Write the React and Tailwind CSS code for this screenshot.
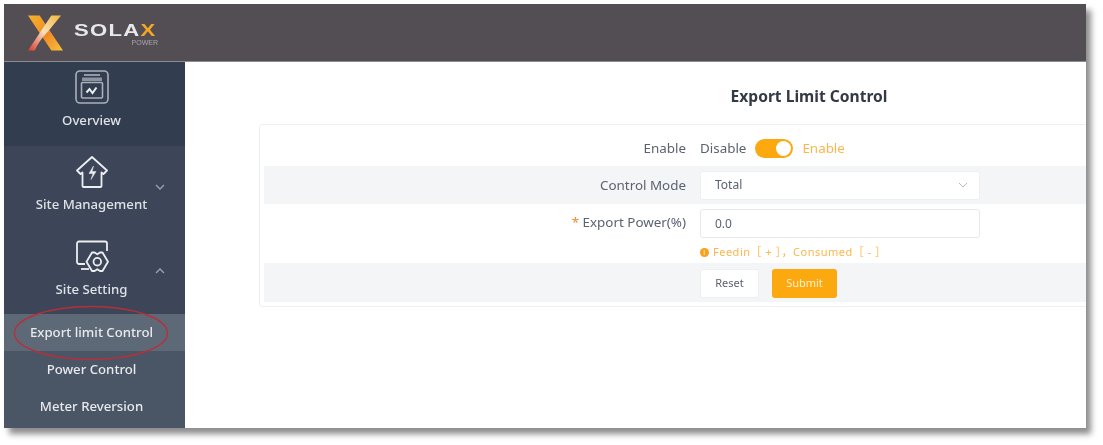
const font = { fontFamily: '"Noto Sans", "Open Sans", "Noto Sans CJK SC", sans-serif' };
const logoFont = { fontFamily: '"Liberation Sans", sans-serif' };

function Logo() {
  return (
    <div className="flex items-center pl-[23px] h-full blur-[0.5px]">
      <svg width="37" height="38" viewBox="0 0 38 38">
        <defs>
          <linearGradient id="a" x1="0" y1="0" x2="1" y2="1">
            <stop offset="0" stopColor="#f5b32c" />
            <stop offset="0.55" stopColor="#f08a24" />
            <stop offset="1" stopColor="#f7c23c" />
          </linearGradient>
          <linearGradient id="b" x1="1" y1="0" x2="0" y2="1">
            <stop offset="0" stopColor="#f7b733" />
            <stop offset="0.5" stopColor="#f5e0c0" />
            <stop offset="1" stopColor="#d9392a" />
          </linearGradient>
        </defs>
        <path d="M1 1h12l24 36H25z" fill="url(#a)" />
        <path d="M35 1H25L1 37h7c4-9 10-16 14-20z" fill="url(#b)" />
      </svg>
      <div className="ml-[10px] mt-[4px] w-[84px] flex flex-col">
        <div className="text-[17px] leading-[15px] font-bold tracking-[1px] text-[#e8e8ea] origin-left scale-x-[1.3] whitespace-nowrap" style={logoFont}>
          SOLA<span className="text-[#f5a623]">X</span>
        </div>
        <div className="text-[7px] leading-[8px] mt-[1px] text-right text-[#a9a8ac]" style={logoFont}>POWER</div>
      </div>
    </div>
  );
}

function NavItem({ icon, label, arrow, className, labelClass = "mt-[6px]" }) {
  return (
    <div className={`relative flex flex-col items-center pr-[6px] ${className}`}>
      {icon}
      <span className={`text-[13.2px] leading-[18px] font-medium text-[#dfe2e6] ${labelClass}`}>{label}</span>
      {arrow && (
        <svg className="absolute right-[20px] top-[38px]" width="10" height="6" viewBox="0 0 10 6" fill="none" stroke="#9aa3af" strokeWidth="1.3">
          <path d={arrow === "down" ? "M1 1l4 4 4-4" : "M1 5l4-4 4 4"} />
        </svg>
      )}
    </div>
  );
}

function SubItem({ label, active }) {
  return (
    <div className={`h-[37px] flex items-center justify-center pr-[6px] text-[13.2px] font-medium text-[#e8eaed] ${active ? "bg-[#5e6977]" : ""}`}>
      {label}
    </div>
  );
}

function App() {
  return (
    <div className="w-[1103px] h-[445px] bg-white overflow-hidden pl-[4px] pt-[4px]" style={font}>
      <div className="relative w-[1082px] h-[424px] flex flex-col bg-white shadow-[5px_6px_6px_rgba(0,0,0,0.45)]">
        <header className="h-[58px] shrink-0 bg-[#524e53] border-b border-[#8f8b92]">
          <Logo />
        </header>

        <div className="flex flex-1 min-h-0">
          <aside className="w-[181px] shrink-0 bg-[#3c4658] flex flex-col blur-[0.5px]">
            <NavItem
              className="h-[84px] pt-[8px] bg-[#333d50]"
              labelClass="mt-[7px]"
              label="Overview"
              icon={
                <svg width="34" height="34" viewBox="0 0 34 34" fill="none" stroke="#aab0ba" strokeWidth="1.6">
                  <rect x="1" y="1" width="32" height="32" rx="4" />
                  <path d="M9 5h16" />
                  <rect x="7" y="7.500" width="20" height="3.500" fill="#8d94a0" stroke="none" />
                  <rect x="6.500" y="12.500" width="21" height="15.500" rx="1" />
                  <path d="M11.500 22.500l3-3.500 3 4 4-5.500" stroke="#eceef0" strokeWidth="2" />
                </svg>
              }
            />
            <NavItem
              className="h-[84px] pt-[9px]"
              label="Site Management"
              arrow="down"
              icon={
                <svg width="34" height="34" viewBox="0 0 34 34" fill="none" stroke="#eceef0" strokeWidth="1.8" strokeLinejoin="round">
                  <path d="M17 2L2 15.500l3.500 3.500 2-1.500V31a1 1 0 001 1h17a1 1 0 001-1V17.500l2 1.500 3.500-3.500z" />
                  <path d="M18.500 11l-4.500 7.500h4l-2 6 5-8h-4z" fill="#eceef0" strokeWidth="0.5" />
                </svg>
              }
            />
            <NavItem
              className="h-[84px] pt-[10px]"
              label="Site Setting"
              arrow="up"
              icon={
                <svg width="34" height="34" viewBox="0 0 34 34" fill="none" stroke="#eceef0" strokeWidth="1.8" strokeLinejoin="round">
                  <path d="M10 24H4a2 2 0 01-2-2V3.500a2 2 0 012-2h26a2 2 0 012 2V11" />
                  <path d="M6 29h8" />
                  <path d="M33 21.700L27.500 12.500h-2.500l-2.700 1.800-2.700-1.800H17l-5.500 9.200L17 31h2.600l2.700-1.800L25 31h2.500z" />
                  <circle cx="22.300" cy="21.700" r="3.800" />
                </svg>
              }
            />
            <div className="flex-1 bg-[#4a5566]">
              <SubItem label="Export limit Control" active />
              <SubItem label="Power Control" />
              <SubItem label="Meter Reversion" />
            </div>
          </aside>

          <main className="flex-1 min-w-0 overflow-hidden blur-[0.5px]">
            <div className="w-[1248px] px-[74px]">
              <h1 className="text-center text-[15.6px] leading-[20px] font-bold text-[#333a45] mt-[24px] mb-[18px]">Export Limit Control</h1>
              <div className="h-[183px] border border-[#eeeff1] rounded-[3px] px-[4px] pt-[4px] pb-[5px] text-[13.4px] text-[#5b6270]">
                <div className="h-[37px] flex items-center pt-[2px]">
                  <label className="w-[422px] text-right">Enable</label>
                  <div className="ml-[14px] flex items-center">
                    <span>Disable</span>
                    <span className="ml-[9px] w-[38px] h-[19px] rounded-full bg-[#fba90f] flex items-center justify-end pr-[2px]">
                      <span className="w-[15px] h-[15px] rounded-full bg-white" />
                    </span>
                    <span className="ml-[9px] text-[#fdb64a]">Enable</span>
                  </div>
                </div>

                <div className="h-[38px] flex items-center bg-[#f4f5f7]">
                  <label className="w-[422px] text-right">Control Mode</label>
                  <div className="ml-[14px] w-[280px] h-[29px] bg-white rounded-[3px] border border-[#eeeff1] flex items-center justify-between pl-[14px] pr-[11px] text-[12px]">
                    <span>Total</span>
                    <svg width="10" height="6" viewBox="0 0 10 6" fill="none" stroke="#b5b9c0" strokeWidth="1"><path d="M1 1l4 4 4-4" /></svg>
                  </div>
                </div>

                <div className="h-[59px] pt-[5px]">
                  <div className="flex items-center h-[29px]">
                    <label className="w-[422px] text-right -mt-[2px]"><span className="text-[#f08a24]">* </span>Export Power(%)</label>
                    <div className="ml-[14px] w-[280px] h-[29px] bg-white rounded-[3px] border border-[#e6e8eb] flex items-center pl-[14px] text-[12px]">0.0</div>
                  </div>
                  <div className="ml-[436px] mt-[6px] flex items-center text-[11px] leading-[16px] tracking-[0.5px] text-[#fdb64a] whitespace-nowrap">
                    <span className="w-[9px] h-[9px] rounded-full bg-[#f9a11b] mr-[4px] flex items-center justify-center text-[7px] leading-none text-white">i</span>
                    Feedin［ + ］，Consumed［ - ］
                  </div>
                </div>

                <div className="h-[39px] flex items-center bg-[#f4f5f7] pl-[436px] pt-[2px]">
                  <button className="w-[59px] h-[29px] bg-white rounded-[3px] border border-[#eeeff1] text-[11px]">Reset</button>
                  <button className="ml-[13px] w-[65px] h-[29px] bg-[#fba90f] rounded-[3px] text-[11px] text-[#fff1d6]">Submit</button>
                </div>
              </div>
            </div>
          </main>
        </div>

        {/* red marker drawn over the screenshot */}
        <svg className="absolute left-[9px] top-[300px]" width="156" height="58" viewBox="0 0 156 58" fill="none">
          <ellipse cx="78" cy="29" rx="76.500" ry="26.500" stroke="#b5303a" strokeWidth="1.400" />
        </svg>
      </div>
    </div>
  );
}

export default App;
